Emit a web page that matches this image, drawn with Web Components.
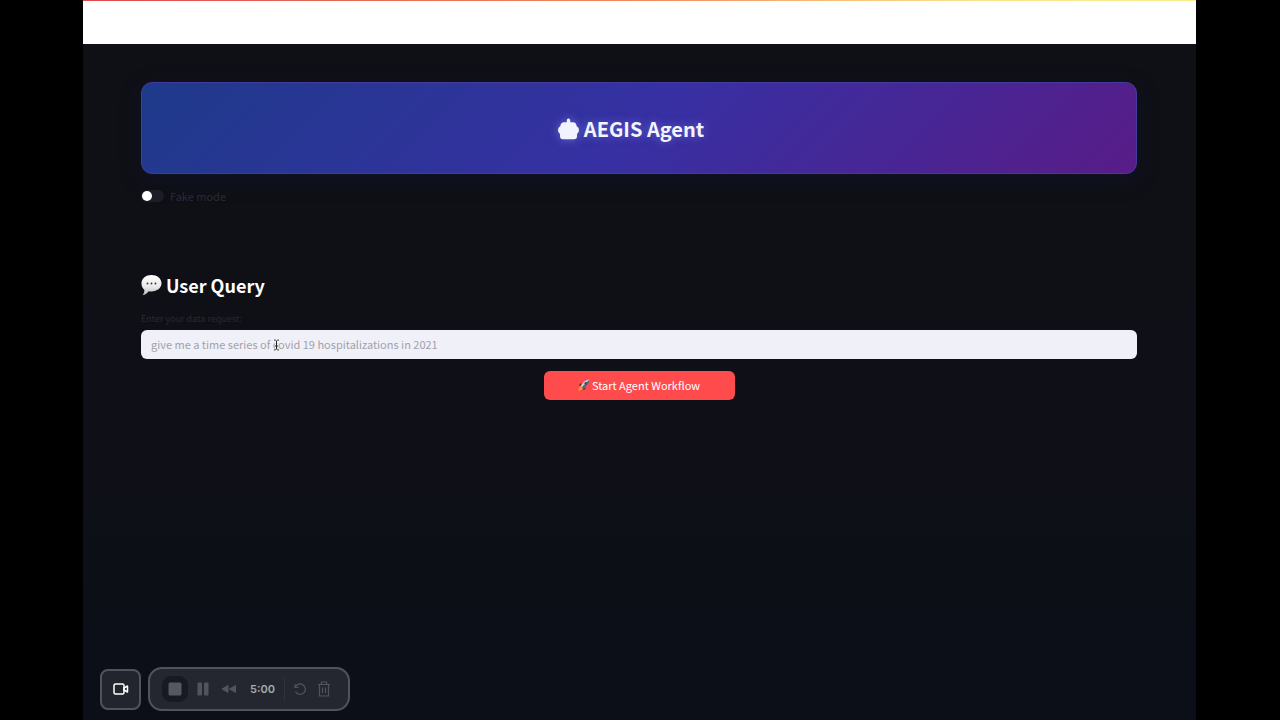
<!DOCTYPE html>
<html lang="en">
<head>
<meta charset="utf-8">
<title>AEGIS Agent</title>
<style>
  body { margin: 0; background: #000; color: #fafafa; font-family: "Noto Sans CJK SC", "Noto Sans", sans-serif; }
</style>
</head>
<body>
<aegis-app>
  <app-hero>AEGIS Agent</app-hero>
  <mode-toggle>Fake mode</mode-toggle>
  <query-form></query-form>
  <recorder-bar slot="recorder"></recorder-bar>
</aegis-app>

<script>
const define = (name, html, setup) => {
  const template = document.createElement('template');
  template.innerHTML = html;
  customElements.define(name, class extends HTMLElement {
    constructor() {
      super();
      this.attachShadow({ mode: 'open' }).append(template.content.cloneNode(true));
      if (setup) setup(this.shadowRoot);
    }
  });
};

define('aegis-app', `
  <style>
    :host { display: flex; min-height: 100vh; box-sizing: border-box; padding: 0 84px 0 83px; }
    .page { flex: 1; min-width: 0; display: flex; flex-direction: column; background: linear-gradient(#0f1016, #0f0f17 50%, #0c0f17); }
    header { height: 44px; box-sizing: border-box; background: #fff; border-top: 1px solid; border-image: linear-gradient(90deg, #e0484c, #f08a60 50%, #fbe38a 80%, #f8ee90) 1; }
    main { padding: 38px 59px 0 58px; }
    footer { margin-top: auto; padding: 24px 17px 9px; }
  </style>
  <div class="page">
    <header></header>
    <main><slot></slot></main>
    <footer><slot name="recorder"></slot></footer>
  </div>`);

define('app-hero', `
  <style>
    :host { display: flex; height: 92px; box-sizing: border-box; align-items: center; justify-content: center; gap: 5px; padding: 2px 16px 0 0;
      border: 1px solid #453aa0; border-radius: 11px; background: linear-gradient(135deg, #1e3a8a, #3730a3 50%, #581c87) border-box;
      box-shadow: 0 6px 22px rgba(10, 30, 70, .25); }
    h1 { margin: 0; font-size: 20px; line-height: 32px; font-weight: 700; color: #f3f4ff; text-shadow: 0 0 10px rgba(150, 160, 255, .5); }
    svg { width: 21px; height: 22px; fill: #f1f3ff; filter: drop-shadow(0 0 5px rgba(150, 160, 255, .5)); }
  </style>
  <svg viewBox="0 0 21 22" aria-hidden="true"><path d="M10.500 .5a1.700 1.700 0 0 1 1.700 1.700V4.200H15q3.200 0 3.700 4q2.300 1 2.300 3.900t-2 3.900v2.300q0 3-3 3H5q-3 0-3-3V16q-2-1-2-3.900T2.300 8.200Q2.800 4.200 6 4.200H8.800V2.200A1.700 1.700 0 0 1 10.500 .5z"/></svg>
  <h1><slot></slot></h1>`);

define('mode-toggle', `
  <style>
    :host { display: block; margin-top: 14px; }
    label { display: flex; width: fit-content; align-items: center; gap: 6px; font-size: 11px; line-height: 16px; color: #292b35; }
    input { appearance: none; display: flex; align-items: center; margin: 0; width: 23px; height: 12px; padding: 0 1px; box-sizing: border-box; border-radius: 6px; background: #1c1d25; }
    input::before { content: ""; width: 10px; height: 10px; border-radius: 50%; background: #fff; }
    input:checked { justify-content: flex-end; }
  </style>
  <label><input type="checkbox" role="switch"><span><slot></slot></span></label>`);

define('query-form', `
  <style>
    :host { display: block; margin-top: 68px; }
    form { display: flex; flex-direction: column; }
    h2 { display: flex; align-items: center; gap: 4px; margin: 0; font-size: 18px; line-height: 26px; font-weight: 700; color: #fff; }
    h2 svg { width: 21px; height: 22px; }
    label { margin-top: 13px; font-size: 9px; line-height: 16px; color: #282a33; }
    .field { position: relative; display: flex; margin-top: 3px; }
    input { flex: 1; min-width: 0; box-sizing: border-box; height: 29px; margin: 0; padding: 0 10px 2px; border: 0; border-radius: 6px; background: #f0f0f8; color: #31333f; font: 11px/16px "Noto Sans CJK SC", "Noto Sans", sans-serif; outline: none; }
    input::placeholder { color: #a1a2ab; opacity: 1; }
    .pointer { position: absolute; left: 132px; top: 9px; width: 7px; height: 12px; pointer-events: none; }
    button { align-self: center; display: flex; align-items: center; justify-content: center; gap: 2px; box-sizing: border-box; width: 191px; height: 29px; margin: 12px 0 0; padding: 0 0 2px; border: 0; border-radius: 6px; background: #ff4b4b; color: #fff; font: 11px/16px "Noto Sans CJK SC", "Noto Sans", sans-serif; }
    button svg { width: 12px; height: 12px; }
  </style>
  <form>
    <h2>
      <svg viewBox="0 0 21 22" aria-hidden="true">
        <defs><linearGradient id="b" x2="0" y2="1"><stop stop-color="#fff"/><stop offset=".6" stop-color="#e8e8ea"/><stop offset="1" stop-color="#bbbcc0"/></linearGradient></defs>
        <path fill="url(#b)" d="M10.500 1C16 1 20.500 4.500 20.500 9.300S16 17.500 10.500 17.500q-1.500 0-2.800-.3C6 19.500 4 20.800 1.500 21c1.500-1.600 2-3 1.800-5.300C1.500 14.200.5 12 .5 9.300c0-4.800 4.500-8.300 10-8.300z"/>
        <g fill="#333"><circle cx="6.500" cy="9.500" r=".9"/><circle cx="10.500" cy="9.500" r=".9"/><circle cx="14.500" cy="9.500" r=".9"/></g>
      </svg>
      <span>User Query</span>
    </h2>
    <label for="q">Enter your data request:</label>
    <div class="field">
      <input id="q" type="text" placeholder="give me a time series of covid 19 hospitalizations in 2021">
      <svg class="pointer" viewBox="0 0 7 12" fill="none" aria-hidden="true"><path stroke="#fff" stroke-width="2" d="M1 1q2 0 2.500 1Q4 1 6 1M3.500 2v8M1 11q2 0 2.500-1Q4 11 6 11M2.500 6.500h2"/><path stroke="#222" d="M1 1q2 0 2.500 1Q4 1 6 1M3.500 2v8M1 11q2 0 2.500-1Q4 11 6 11M2 7h3"/></svg>
    </div>
    <button type="submit">
      <svg viewBox="0 0 12 12" aria-hidden="true">
        <path fill="#f7a928" d="M2.500 7.500Q.5 8.500 .3 11.700 3.500 11.500 4.500 9.500z"/>
        <path fill="#57343c" d="M4 4.300Q1.700 4 .8 6.600L3.300 6.800zM7.700 8Q8 10.300 5.400 11.200L5.200 8.700z"/>
        <path fill="#c9ced6" d="M2.800 7.200C4 4 7 .8 11.600.4 11.200 5 8 8 4.800 9.200z"/>
        <path fill="#59606c" d="M4.800 9.200C8 8 11.200 5 11.600.4L3.800 8.200z"/>
        <circle cx="7.800" cy="4.200" r="1.300" fill="#3b4f70"/>
      </svg>
      <span>Start Agent Workflow</span>
    </button>
  </form>`, root => root.querySelector('form').addEventListener('submit', e => e.preventDefault()));

define('recorder-bar', `
  <style>
    :host { display: flex; align-items: center; gap: 7px; font-family: Inter, sans-serif; }
    button { display: grid; place-items: center; margin: 0; padding: 0; border: 0; background: none; color: #51545d; }
    .camera { width: 41px; height: 41px; border: 2px solid #50535c; border-radius: 8px; background: #22252e; color: #fff; }
    .panel { display: flex; align-items: center; box-sizing: border-box; width: 202px; height: 44px; padding: 0 12px; border: 2px solid #50535c; border-radius: 14px; background: #24272f; }
    .stop { width: 26px; height: 26px; border-radius: 9px; background: #171a22; }
    .small { width: 24px; height: 24px; }
    .rewind { margin: 0 9px 0 2px; }
    .pause { margin-left: 3px; }
    time { flex: 1; font-size: 11px; line-height: 16px; font-weight: 600; color: #a6a8ae; }
    .line { width: 1px; height: 24px; margin-right: 3px; background: #30333b; }
    svg { display: block; }
  </style>
  <button class="camera" type="button" aria-label="Camera"><svg width="16" height="14" viewBox="0 0 16 14" fill="none" stroke="currentColor" stroke-width="1.500" stroke-linejoin="round"><rect x="1" y="2" width="10" height="10" rx="1.500"/><path d="M11 6l3.500-2v6L11 8z"/></svg></button>
  <div class="panel">
    <button class="stop" type="button" aria-label="Stop"><svg width="14" height="14" viewBox="0 0 14 14"><rect x=".5" y=".5" width="13" height="13" rx="1.500" fill="#555861"/></svg></button>
    <button class="small pause" type="button" aria-label="Pause"><svg width="12" height="14" viewBox="0 0 12 14" fill="currentColor"><rect x=".5" y=".5" width="4.500" height="13" rx="1"/><rect x="7" y=".5" width="4.500" height="13" rx="1"/></svg></button>
    <button class="small rewind" type="button" aria-label="Rewind"><svg width="16" height="10" viewBox="0 0 16 10" fill="currentColor" stroke="currentColor" stroke-linejoin="round"><path d="M1 5l6-3.500v7zM8.500 5l6-3.500v7z"/></svg></button>
    <time>5:00</time>
    <span class="line"></span>
    <button class="small" type="button" aria-label="Restart"><svg width="14" height="14" viewBox="0 0 14 14" fill="none" stroke="currentColor" stroke-width="1.200"><path d="M2 2v3.500h3.500M2.300 5.300A5.200 5.200 0 1 1 2.500 9.500"/></svg></button>
    <button class="small" type="button" aria-label="Delete"><svg width="14" height="16" viewBox="0 0 14 16" fill="none" stroke="currentColor" stroke-width="1.200"><path d="M1 3.500h12M4.500 3.500V1h5v2.500M2.500 3.500V15h9V3.500M5.500 6.500v5.500M8.500 6.500v5.500"/></svg></button>
  </div>`);
</script>
</body>
</html>
